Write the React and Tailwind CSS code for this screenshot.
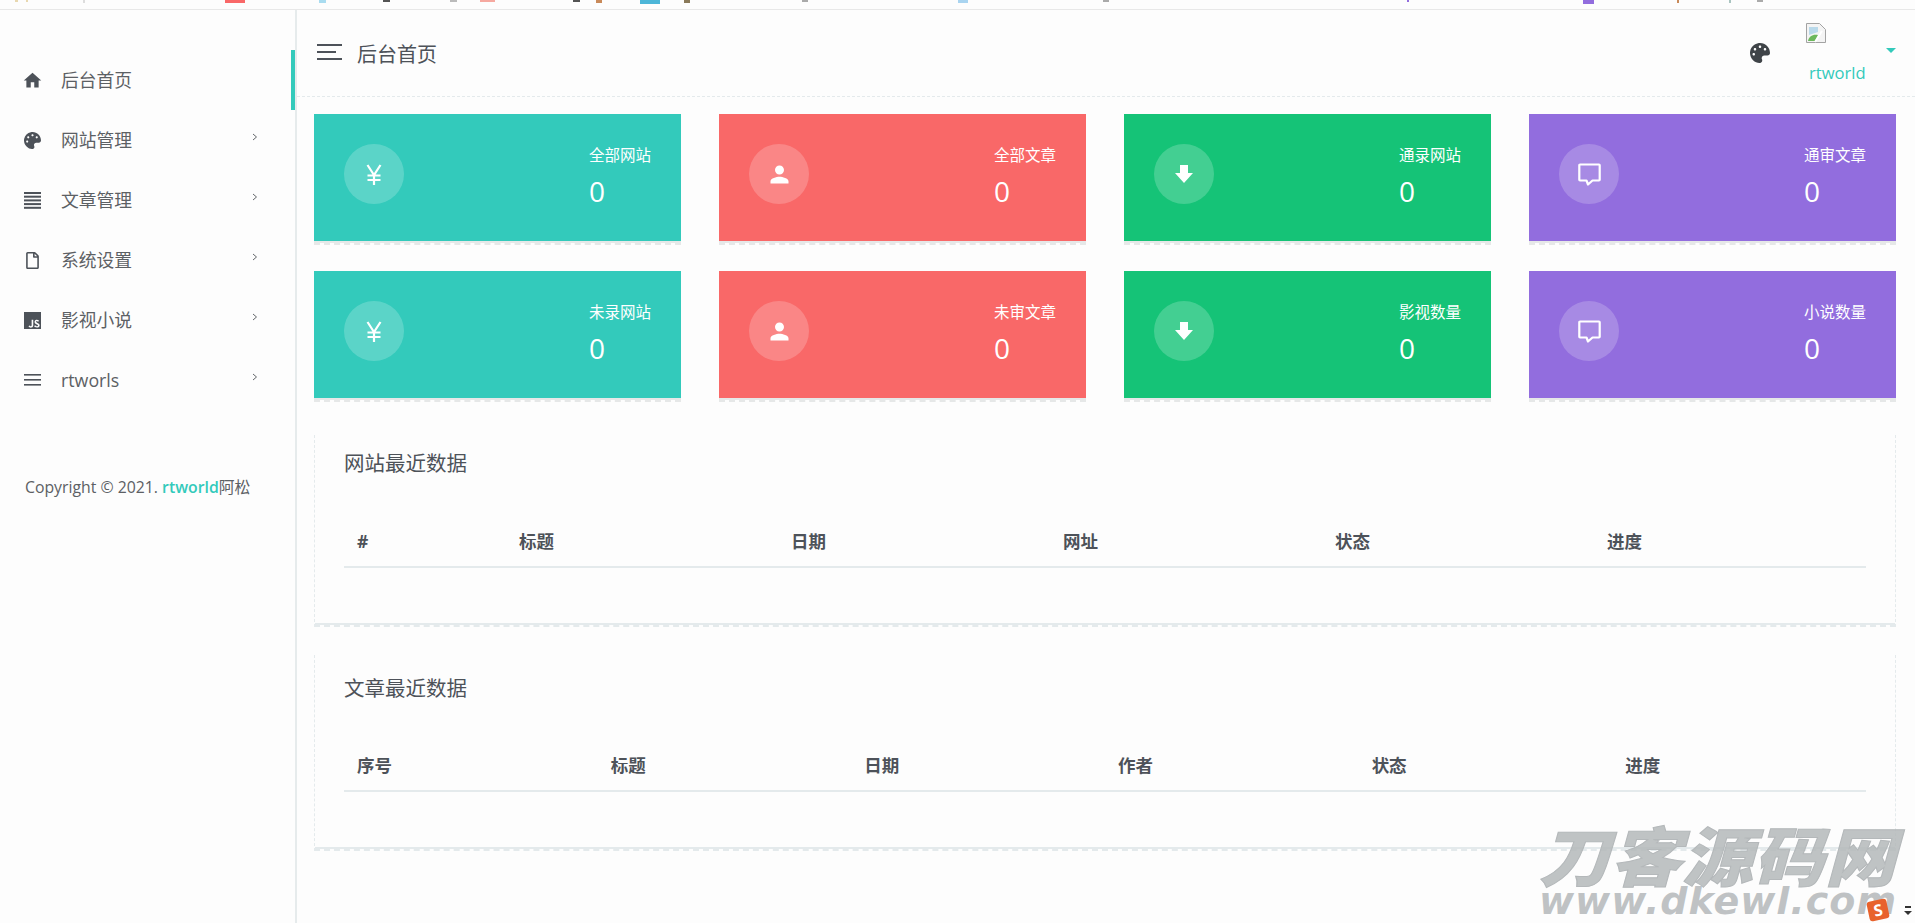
import { FaPalette, FaRegFile } from 'react-icons/fa';
import { MdHome, MdPerson } from 'react-icons/md';
import { SiJavascript } from 'react-icons/si';

const fontStack = 'font-["Open_Sans","Noto_Sans_CJK_SC",sans-serif]';

const JustifyIcon = () => (
  <svg width="17" height="17" viewBox="0 0 17 17" fill="currentColor">
    <rect x="0" y="0" width="17" height="2" />
    <rect x="0" y="3.7" width="17" height="2" />
    <rect x="0" y="7.4" width="17" height="2" />
    <rect x="0" y="11.1" width="17" height="2" />
    <rect x="0" y="14.8" width="17" height="2" />
  </svg>
);

const LinesIcon = () => (
  <svg width="17" height="12" viewBox="0 0 17 12" fill="currentColor">
    <rect x="0" y="0" width="17" height="1.6" />
    <rect x="0" y="5" width="17" height="1.6" />
    <rect x="0" y="10" width="17" height="1.6" />
  </svg>
);

const Chevron = () => (
  <svg width="6" height="8" viewBox="0 0 6 8" fill="none" stroke="#63676b" strokeWidth="1" className="mb-[6px]">
    <path d="M1 1l3.5 3L1 7" />
  </svg>
);

const YenIcon = () => (
  <svg width="16" height="21" viewBox="0 0 16 21" fill="none" stroke="#fff" strokeWidth="2.2">
    <path d="M1.5 1l6.5 10 6.5-10M8 11v10M1.5 11.5h13M1.5 16h13" />
  </svg>
);

const ArrowIcon = () => (
  <svg width="18" height="18" viewBox="0 0 18 18" fill="#fff">
    <path d="M5 0h8v8h5l-9 10L0 8h5z" />
  </svg>
);

const ChatIcon = () => (
  <svg width="23" height="23" viewBox="0 0 23 23" fill="none" stroke="#fff" strokeWidth="2.2" strokeLinejoin="round">
    <path d="M2 1.5h19a.7.7 0 0 1 .7.7v14.6a.7.7 0 0 1-.7.7h-6.5L10 21.5l-1.5-4H2a.7.7 0 0 1-.7-.7V2.2a.7.7 0 0 1 .7-.7z" />
  </svg>
);

const BrokenImage = () => (
  <svg width="20" height="20" viewBox="0 0 20 20">
    <path d="M0.5 0.5h13l6 6v13h-19z" fill="#f4f4f4" stroke="#a3a3a3" />
    <path d="M3 4h9v5l-9 3z" fill="#b9d9ea" />
    <path d="M2 18c1-5 5-7 10-6l-3 6z" fill="#6cb85c" />
    <path d="M16 8L9 19" stroke="#fff" strokeWidth="2" />
  </svg>
);

const navItems = [
  { label: '后台首页', icon: <MdHome size={21} className="shrink-0" />, active: true },
  { label: '网站管理', icon: <FaPalette size={17} />, sub: true },
  { label: '文章管理', icon: <JustifyIcon />, sub: true },
  { label: '系统设置', icon: <FaRegFile size={17} />, sub: true },
  { label: '影视小说', icon: <SiJavascript size={17} />, sub: true },
  { label: 'rtworls', icon: <LinesIcon />, sub: true },
];

const statCards = [
  { label: '全部网站', bg: 'bg-[#33cabb]', icon: <YenIcon /> },
  { label: '全部文章', bg: 'bg-[#f96868]', icon: <MdPerson size={27} color="#fff" /> },
  { label: '通录网站', bg: 'bg-[#15c377]', icon: <ArrowIcon /> },
  { label: '通审文章', bg: 'bg-[#926dde]', icon: <ChatIcon /> },
  { label: '未录网站', bg: 'bg-[#33cabb]', icon: <YenIcon /> },
  { label: '未审文章', bg: 'bg-[#f96868]', icon: <MdPerson size={27} color="#fff" /> },
  { label: '影视数量', bg: 'bg-[#15c377]', icon: <ArrowIcon /> },
  { label: '小说数量', bg: 'bg-[#926dde]', icon: <ChatIcon /> },
];

// clipped bookmark bar at the very top of the capture
const topBits = [
  'ml-[15px] w-[3px] h-[2px] bg-[#e8d8b0]',
  'ml-[8px] w-[2px] h-[2px] bg-[#e8d8b0]',
  'ml-[55px] w-[2px] h-[3px] bg-[#dddddd]',
  'ml-[140px] w-[20px] h-[3px] bg-[#f96868]',
  'ml-[74px] w-[7px] h-[3px] bg-[#a9dcf0]',
  'ml-[57px] w-[7px] h-[2px] bg-[#555555]',
  'ml-[60px] w-[7px] h-[2px] bg-[#bbbbbb]',
  'ml-[23px] w-[15px] h-[2px] bg-[#f6a9a0]',
  'ml-[78px] w-[7px] h-[2px] bg-[#555555]',
  'ml-[16px] w-[6px] h-[3px] bg-[#c98a5a]',
  'ml-[38px] w-[20px] h-[4px] bg-[#4db6d8]',
  'ml-[24px] w-[6px] h-[3px] bg-[#8a7a5a]',
  'ml-[112px] w-[6px] h-[2px] bg-[#aaaaaa]',
  'ml-[150px] w-[10px] h-[3px] bg-[#a9d4f0]',
  'ml-[135px] w-[6px] h-[2px] bg-[#aaaaaa]',
  'ml-[298px] w-[2px] h-[2px] bg-[#926dde]',
  'ml-[174px] w-[11px] h-[4px] bg-[#926dde]',
  'ml-[83px] w-[2px] h-[3px] bg-[#c98a5a]',
  'ml-[50px] w-[2px] h-[3px] bg-[#a9c4c0]',
  'ml-[26px] w-[6px] h-[2px] bg-[#aaaaaa]',
];

const DataTable = ({ title, cols, firstCol, topPad, titleGap }) => (
  <section className="border-x border-b-2 border-dashed border-[#e4eaec]">
    <div className={`${topPad} px-[29px] pb-[55px] border-b-2 border-[#e4eaec]`}>
      <h4 className={`${titleGap} h-[30px] text-[20.5px] leading-[30px] font-normal text-[#4d5259]`}>{title}</h4>
      <table className="w-full table-fixed">
        <thead>
          <tr className="border-b-2 border-[#e4eaec]">
            {cols.map((c, i) => (
              <th
                key={c}
                className={`${i === 0 ? firstCol : ''} h-[51px] pl-[13px] text-left text-[17.5px] font-bold text-[#4d5259]`}
              >
                {c}
              </th>
            ))}
          </tr>
        </thead>
      </table>
    </div>
  </section>
);

const App = () => {
  return (
    <div className={`${fontStack} relative h-[923px] overflow-hidden bg-[#fdfdfd] text-[#4d5259]`}>
      <div className="flex items-start h-[10px] border-b border-[#e8e8e8]">
        {topBits.map((b) => (
          <span key={b} className={b} />
        ))}
      </div>

      <div className="flex h-[913px]">
        <aside className="relative w-[297px] shrink-0 pt-[40px] border-r-2 border-[#e6ebec]">
          {navItems.map((item) => (
            <div key={item.label} className="relative flex items-center h-[60px] pl-[24px] pr-[37px]">
              {item.active && <span className="absolute right-0 top-0 w-1 h-full bg-[#33cabb]" />}
              <span className="flex items-center justify-center w-[17px] text-[#4d5259]">{item.icon}</span>
              <span className="ml-[20px] flex-1 text-[17.8px] text-[#5c6064]">{item.label}</span>
              {item.sub && <Chevron />}
            </div>
          ))}
          <p className="mt-[65px] pl-[25px] text-[15.8px] leading-[24px] whitespace-nowrap text-[#5c6064]">
            Copyright © 2021. <span className="font-semibold text-[#33cabb]">rtworld</span>阿松
          </p>
        </aside>

        <main className="flex-1 min-w-0">
          <header className="flex items-center h-[87px] pl-[20px] pr-[19px] border-b border-dashed border-[#e4eaec]">
            <svg width="25" height="17" viewBox="0 0 25 17" fill="#4d5259" className="mb-[2px]">
              <rect x="0" y="0" width="25" height="2" />
              <rect x="0" y="7" width="19" height="2" />
              <rect x="0" y="14" width="25" height="2" />
            </svg>
            <span className="ml-[15px] mt-[3px] text-[20px] text-[#4d5259]">后台首页</span>
            <div className="ml-auto flex items-center">
              <FaPalette size={20} color="#3f4448" />
              <div className="ml-[36px] w-[60px] pt-[2px]">
                <BrokenImage />
                <div className="mt-[18px] pl-[3px] text-[16.6px] leading-[24px] text-[#33cabb]">rtworld</div>
              </div>
              <span className="ml-[20px] mb-[5px] w-0 h-0 border-x-[5px] border-t-[5px] border-x-transparent border-t-[#33cabb]" />
            </div>
          </header>

          <div className="pt-[17px] pl-[17px] pr-[19px]">
            <div className="grid grid-cols-4 gap-x-[38px] gap-y-[26px]">
              {statCards.map((card) => (
                <div key={card.label} className="border-b-2 border-dashed border-[#e6e8e8]">
                  <div className="border-b-2 border-[#e6e8e8]">
                    <div className={`${card.bg} flex items-start justify-between h-[127px] pl-[30px] pr-[30px]`}>
                      <span className="mt-[30px] flex items-center justify-center w-[60px] h-[60px] rounded-full bg-white/20">
                        {card.icon}
                      </span>
                      <div className="pt-[29px] text-white">
                        <div className="text-[15.5px] leading-[24px]">{card.label}</div>
                        <div className="mt-[6px] text-[28px] leading-[36px]">0</div>
                      </div>
                    </div>
                  </div>
                </div>
              ))}
            </div>

            <div className="mt-[33px]">
              <DataTable
                title="网站最近数据"
                cols={['#', '标题', '日期', '网址', '状态', '进度']}
                firstCol="w-[162px]"
                topPad="pt-[13px]"
                titleGap="mb-[38px]"
              />
            </div>
            <div className="mt-[28px]">
              <DataTable
                title="文章最近数据"
                cols={['序号', '标题', '日期', '作者', '状态', '进度']}
                firstCol=""
                topPad="pt-[18px]"
                titleGap="mb-[37px]"
              />
            </div>
          </div>
        </main>
      </div>

      {/* watermark stamped over the capture */}
      <div className="absolute left-[1539px] top-[820px] w-[376px] pointer-events-none text-[#b4b8ba]/85 italic">
        <div className="h-[66px] origin-left scale-x-[1.1] font-['Noto_Sans_CJK_SC',sans-serif] font-black text-[64px] leading-[66px] tracking-[1px] [-webkit-text-stroke:1px_#b4b8ba] whitespace-nowrap">
          刀客源码网
        </div>
        <div className="font-['DejaVu_Sans',sans-serif] font-bold text-[38px] leading-[30px] whitespace-nowrap tracking-[1px]">
          www.dkewl.com
        </div>
      </div>

      {/* input method badge */}
      <div className="absolute left-[1868px] top-[900px] flex items-center">
        <span className="flex items-center justify-center w-[20px] h-[20px] rounded-[3px] -rotate-12 bg-[#e8622c] text-white text-[16px] leading-none font-bold">
          S
        </span>
        <span className="ml-[16px] flex flex-col items-center gap-[3px]">
          <span className="w-[6px] h-[2px] bg-[#333333]" />
          <span className="w-0 h-0 border-x-[4px] border-t-[4px] border-x-transparent border-t-[#333333]" />
        </span>
      </div>
    </div>
  );
};

export default App;
